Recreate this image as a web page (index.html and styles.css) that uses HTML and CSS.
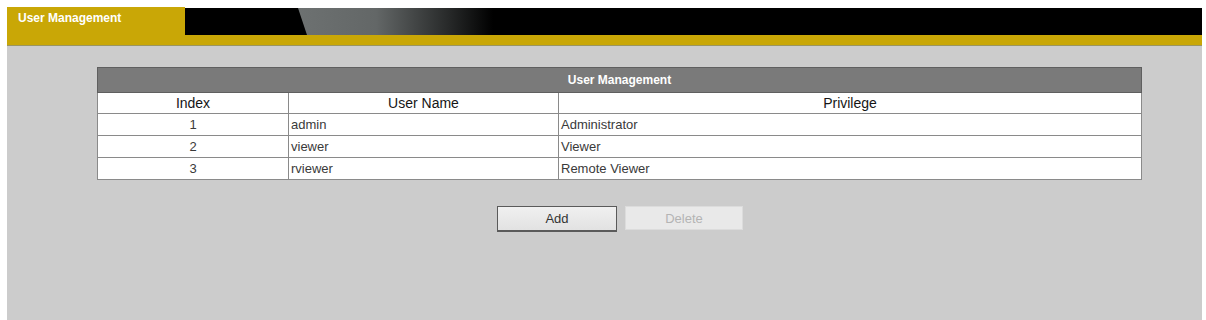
FILE: index.html
```html
<!DOCTYPE html>
<html lang="en">
<head>
  <meta charset="UTF-8" />
  <title>User Management</title>
  <link rel="stylesheet" href="styles.css">
</head>
<body>
  <div class="frame">
    <div class="tabbar">
      <div class="tab">User Management</div>
      <div class="tabfill"></div>
    </div>
    <div class="band"></div>

    <div class="content">
      <table class="users">
        <tr>
          <th colspan="3" class="caption">User Management</th>
        </tr>
        <tr class="head">
          <td class="c-index">Index</td>
          <td class="c-name">User Name</td>
          <td>Privilege</td>
        </tr>
        <tr>
          <td class="num">1</td>
          <td>admin</td>
          <td>Administrator</td>
        </tr>
        <tr>
          <td class="num">2</td>
          <td>viewer</td>
          <td>Viewer</td>
        </tr>
        <tr>
          <td class="num">3</td>
          <td>rviewer</td>
          <td>Remote Viewer</td>
        </tr>
      </table>

      <div class="actions">
        <button class="btn">Add</button>
        <button class="btn" disabled>Delete</button>
      </div>
    </div>
  </div>
</body>
</html>
```

FILE: styles.css
```css
body {
  margin: 0;
  background: #fff;
  font-family: "Liberation Sans", Arial, sans-serif;
}

.frame {
  margin: 7px 4px 0 7px;
}

.tabbar {
  display: flex;
  height: 28px;
}

.tab {
  width: 178px;
  background: #c9a706;
  color: #fff;
  font-size: 12px;
  font-weight: bold;
  padding: 4px 0 0 11px;
  box-sizing: border-box;
}

.tabfill {
  flex: 1;
  position: relative;
  background: #000;
  margin-top: 1px;
}

/* grey slanted highlight on the black bar */
.tabfill::before {
  content: "";
  position: absolute;
  top: 0;
  bottom: 0;
  left: 113px;
  width: 195px;
  background: linear-gradient(to right, #6d7171 0%, #636767 40%, #262828 78%, #000 100%);
  clip-path: polygon(0 0, 100% 0, 100% 100%, 9px 100%);
}

.band {
  height: 10px;
  background: #c9a706;
  border-bottom: 1px solid #9a9560;
}

.content {
  background: #cccccc;
  height: 280px;
  padding-top: 21px;
  box-sizing: border-box;
}

.users {
  margin-left: 90px;
  width: 1045px;
  border-collapse: collapse;
  border: 1px solid #5f5f5f;
  background: #fff;
}

.users td,
.users th {
  border: 1px solid #8a8a8a;
  padding: 0 2px;
  font-size: 13px;
  color: #3a3a3a;
  height: 21px;
}

.users .caption {
  background: #7a7a7a;
  color: #fff;
  font-size: 12px;
  font-weight: bold;
  height: 24px;
  text-align: center;
  border-color: #5f5f5f;
}

.head td {
  text-align: center;
  font-size: 14px;
  color: #151515;
  height: 20px;
}

.c-index {
  width: 186px;
}

.c-name {
  width: 265px;
}

.num {
  text-align: center;
}

.actions {
  display: flex;
  justify-content: center;
  gap: 8px;
  margin-top: 26px;
  padding-left: 31px;
}

.btn {
  width: 120px;
  height: 26px;
  font-family: "Liberation Sans", Arial, sans-serif;
  font-size: 13px;
  color: #333;
  background: linear-gradient(#f0f0f0, #e2e2e2);
  border: 1px solid #5a5a5a;
  border-bottom-width: 2px;
  padding: 0;
}

.btn:disabled {
  width: 118px;
  height: 24px;
  color: #b4b4b4;
  background: #e9e9e9;
  border: 1px solid #dcdcdc;
}
```
